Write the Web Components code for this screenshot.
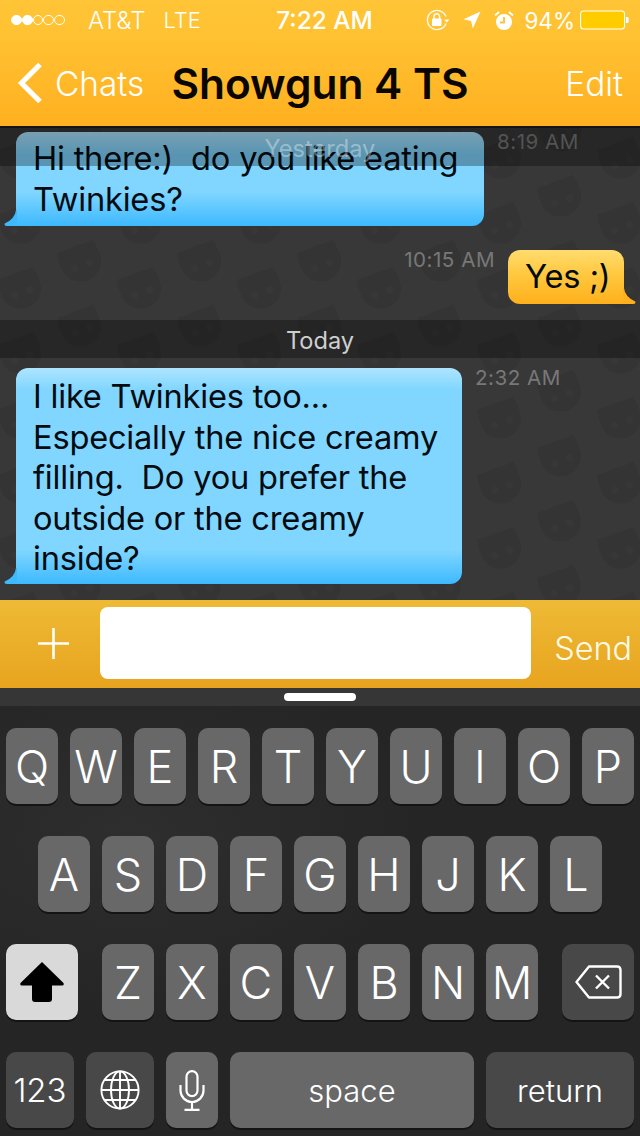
<!DOCTYPE html>
<html>
<head>
<meta charset="utf-8">
<title>Chat</title>
<style>
  html, body { margin: 0; padding: 0; background: #262626; }
  body { width: 640px; height: 1136px; overflow: hidden; font-family: Inter, "Liberation Sans", sans-serif; }
</style>
</head>
<body>
<chat-screen>
  <status-bar></status-bar>
  <nav-bar title="Showgun 4 TS" back="Chats" action="Edit"></nav-bar>
  <chat-view>
    <date-banner slot="overlay" faded>Yesterday</date-banner>
    <chat-bubble time="8:19 AM" style="margin-top:4px;--pt:6px;--pb:7px" w="468">Hi there:)&nbsp; do you like eating<br>Twinkies?</chat-bubble>
    <chat-bubble mine time="10:15 AM" style="margin-top:24px;--pt:6px;--pb:7.5px" w="116">Yes ;)</chat-bubble>
    <date-banner style="margin-top:16px">Today</date-banner>
    <chat-bubble time="2:32 AM" style="margin-top:10px;--pt:8px;--pb:5.5px" w="446">I like Twinkies too...<br>Especially the nice creamy<br>filling.&nbsp; Do you prefer the<br>outside or the creamy<br>inside?</chat-bubble>
  </chat-view>
  <composer-bar></composer-bar>
  <ios-keyboard></ios-keyboard>
</chat-screen>

<script>
const FONT = 'Inter, "Liberation Sans", sans-serif';

class ChatScreen extends HTMLElement {
  constructor() {
    super();
    this.attachShadow({ mode: 'open' });
    this.shadowRoot.innerHTML = `
      <style>
        :host { display: flex; flex-direction: column; width: 640px; height: 1136px; overflow: hidden; }
      </style>
      <slot></slot>`;
  }
}

class StatusBar extends HTMLElement {
  constructor() {
    super();
    this.attachShadow({ mode: 'open' });
    this.shadowRoot.innerHTML = `
      <style>
        :host { display: grid; grid-template-columns: 1fr auto 1fr; align-items: center; height: 40px;
          background: linear-gradient(#ffc536, #ffc131); color: #fff; font: 300 24px ${FONT}; padding: 0 11px; box-sizing: border-box; }
        .l, .r { display: flex; align-items: center; }
        .r { justify-content: flex-end; }
        .dots { display: flex; margin-right: 23px; }
        .d { width: 8.8px; height: 8.8px; border: 1.1px solid #fff; border-radius: 50%; box-sizing: content-box; }
        .d.f { background: #fff; }
        .lte { margin-left: 18px; font-size: 22px; }
        .time { font-weight: 500; font-size: 24.4px; margin-left: 9px; }
        svg { display: block; }
        .pct { margin: 0 5px 0 10px; font-size: 22.5px; font-weight: 400; }
      </style>
      <div class="l">
        <div class="dots"><i class="d f"></i><i class="d f"></i><i class="d"></i><i class="d"></i><i class="d"></i></div>
        <span>AT&amp;T</span><span class="lte">LTE</span>
      </div>
      <div class="time">7:22 AM</div>
      <div class="r">
        <svg width="24" height="22" viewBox="0 0 24 22" style="margin-right:13px">
          <path d="M20 14.5A9.6 9.6 0 1 1 20 7.5" fill="none" stroke="#fff" stroke-width="1.3"/>
          <path d="M18 10.5h5.5l-2.7 3z" fill="#fff"/>
          <rect x="6" y="9.5" width="9.5" height="7.5" rx="1" fill="#fff"/>
          <path d="M8 10V7.6a2.8 2.8 0 0 1 5.6 0V10" fill="none" stroke="#fff" stroke-width="1.4"/>
        </svg>
        <svg width="18" height="18" viewBox="0 0 18 18" style="margin-right:13px">
          <path d="M17.5 .5L9.8 17.5 8 10 .5 8.2z" fill="#fff"/>
        </svg>
        <svg width="20" height="21" viewBox="0 0 20 21">
          <circle cx="10" cy="12" r="8" fill="#fff"/>
          <path d="M10 7v5.5H6" fill="none" stroke="#ffc131" stroke-width="1.8"/>
          <path d="M1 5.5L5 2M19 5.5L15 2" stroke="#fff" stroke-width="1.8" fill="none"/>
        </svg>
        <span class="pct">94%</span>
        <svg width="49" height="20" viewBox="0 0 49 20">
          <rect x=".6" y="1" width="44" height="18" rx="3" fill="#ffcc00" stroke="#fff" stroke-width="1.1"/>
          <path d="M46 7h1.2a1.5 1.5 0 0 1 1.5 1.5v3a1.5 1.5 0 0 1-1.5 1.5H46z" fill="#fff"/>
        </svg>
      </div>`;
  }
}

class NavBar extends HTMLElement {
  constructor() {
    super();
    this.attachShadow({ mode: 'open' });
    const back = this.getAttribute('back') || '';
    const title = this.getAttribute('title') || '';
    const action = this.getAttribute('action') || '';
    this.shadowRoot.innerHTML = `
      <style>
        :host { display: grid; grid-template-columns: 1fr auto 1fr; align-items: center; height: 88px;
          box-sizing: border-box; padding: 0 17px; color: #fff;
          background: linear-gradient(#ffc131, #ffb020); border-bottom: 2px solid #141414; font-family: ${FONT}; }
        .back { display: flex; align-items: center; gap: 12px; font-size: 33.4px; font-weight: 300; }
        .back span { padding-top: 2px; }
        h1 { margin: 0; font-size: 42.4px; font-weight: 600; color: #0a0700; white-space: nowrap; }
        .act { justify-self: end; font-size: 33.4px; font-weight: 300; padding-top: 2px; }
        svg { display: block; }
      </style>
      <div class="back">
        <svg width="26" height="42" viewBox="0 0 26 42"><path d="M23 2.5L4.5 21 23 39.5" fill="none" stroke="#fff" stroke-width="5.2"/></svg>
        <span>${back}</span>
      </div>
      <h1>${title}</h1>
      <div class="act">${action}</div>`;
  }
}

class ChatView extends HTMLElement {
  constructor() {
    super();
    this.attachShadow({ mode: 'open' });
    // wallpaper: faint staggered masks
    this.shadowRoot.innerHTML = `
      <style>
        :host { display: block; position: relative; height: 472px; background: #383838; overflow: hidden; }
        .wall { position: absolute; inset: 0; }
        .flow { position: relative; display: flex; flex-direction: column; }
        ::slotted([slot=overlay]) { position: absolute; left: 0; right: 0; top: 0; z-index: 2; }
      </style>
      <svg class="wall" width="640" height="472">
        <defs>
          <g id="m">
            <path d="M-19 -15L-8 -14Q0 -16 8 -14L19 -15Q22 -4 20 7Q15 21 0 22Q-15 21 -20 7Q-22 -4 -19 -15Z" fill="#343434"/>
            <circle cx="-8" cy="6" r="3.5" fill="#373737"/>
            <circle cx="8" cy="6" r="3.5" fill="#373737"/>
          </g>
          <pattern id="p" width="120" height="65" patternUnits="userSpaceOnUse">
            <use href="#m" transform="translate(20 29) rotate(-20)"/>
            <use href="#m" transform="translate(140 29) rotate(-20)"/>
            <use href="#m" transform="translate(80 2) rotate(-20)"/>
            <use href="#m" transform="translate(80 67) rotate(-20)"/>
          </pattern>
        </defs>
        <rect width="640" height="472" fill="url(#p)"/>
      </svg>
      <div class="flow"><slot></slot></div>
      <slot name="overlay"></slot>`;
  }
}

class DateBanner extends HTMLElement {
  constructor() {
    super();
    this.attachShadow({ mode: 'open' });
    const col = this.hasAttribute('faded') ? 'rgba(255,255,255,.36)' : '#cfcfcf';
    this.shadowRoot.innerHTML = `
      <style>
        :host { display: flex; align-items: center; justify-content: center; height: 38px; box-sizing: border-box; padding-top: 2px;
          background: rgba(0,0,0,.3); color: ${col}; font: 400 23.6px ${FONT}; }
      </style>
      <slot></slot>`;
  }
}

class ChatBubble extends HTMLElement {
  constructor() {
    super();
    this.attachShadow({ mode: 'open' });
    const mine = this.hasAttribute('mine');
    const w = this.getAttribute('w');
    const time = this.getAttribute('time') || '';
    const bg = mine
      ? 'linear-gradient(#ffdc6e, #ffc83f 45%, #ffb01c)'
      : 'linear-gradient(#aee5ff 0, #80d6ff 22px, #80d6ff calc(100% - 34px), #3db9ff 100%)';
    const tail = mine ? '#ffb01c' : '#3db9ff';
    this.shadowRoot.innerHTML = `
      <style>
        :host { display: flex; align-items: flex-start; gap: 13px; padding: 0 16px;
          flex-direction: ${mine ? 'row-reverse' : 'row'}; }
        .b { position: relative; width: ${w}px; box-sizing: border-box; padding: var(--pt) 8px var(--pb) 17px;
          border-radius: ${mine ? '12px 12px 0 12px' : '12px 12px 12px 0'}; background: ${bg};
          color: #020b10; font: 400 32.6px/40.5px ${FONT}; letter-spacing: -0.2px; white-space: nowrap; }
        .tail { position: absolute; bottom: 0; ${mine ? 'right: -12px' : 'left: -12px'}; display: block; }
        .t { color: #787878; font: 400 20.6px/20px ${FONT}; letter-spacing: .5px; }
      </style>
      <div class="b">
        <slot></slot>
        <svg class="tail" width="13" height="16" viewBox="0 0 13 16">
          ${mine
            ? '<path d="M0 0h1Q2 9 12.3 13.5Q13 16 10 16H0Z" fill="' + tail + '"/>'
            : '<path d="M13 0h-1Q11 9 .7 13.5Q0 16 3 16H13Z" fill="' + tail + '"/>'}
        </svg>
      </div>
      <div class="t">${time}</div>`;
  }
}

class ComposerBar extends HTMLElement {
  constructor() {
    super();
    this.attachShadow({ mode: 'open' });
    this.shadowRoot.innerHTML = `
      <style>
        :host { display: block; font-family: ${FONT}; }
        .bar { display: flex; align-items: center; height: 88px; box-sizing: border-box; padding: 7px 8px 9px 37px;
          background: linear-gradient(#eeba35, #e8a41f); }
        .plus { width: 33px; height: 33px; flex: none; margin-right: 30px; }
        .field { flex: none; width: 431px; height: 72px; background: #fff; border-radius: 8px; }
        .send { margin-left: auto; color: #fffbe8; font-size: 32.4px; font-weight: 300; padding-top: 10px; }
        .strip { display: flex; justify-content: center; align-items: flex-start; height: 18px; padding-top: 5px;
          box-sizing: border-box; background: #363636; }
        .handle { width: 72px; height: 8px; background: #fff; border-radius: 4px; }
      </style>
      <div class="bar">
        <svg class="plus" viewBox="0 0 33 33"><path d="M16.5 1v31M1 16.5h31" stroke="#fff" stroke-width="2.6"/></svg>
        <div class="field"></div>
        <div class="send">Send</div>
      </div>
      <div class="strip"><div class="handle"></div></div>`;
  }
}

class KbKey extends HTMLElement {
  constructor() {
    super();
    this.attachShadow({ mode: 'open' });
    const w = this.getAttribute('w') || 52;
    const kind = this.getAttribute('kind') || '';
    const bg = kind === 'dark' ? '#484848' : kind === 'on' ? '#d9d9d9' : '#686868';
    const size = this.getAttribute('size') || 45;
    const weight = this.getAttribute('weight') || 340;
    this.shadowRoot.innerHTML = `
      <style>
        :host { display: flex; align-items: center; justify-content: center; flex: none; width: ${w}px; height: 76px;
          border-radius: 10px; background: ${bg}; box-shadow: 0 2px 0 #141414; color: #fff;
          font: ${weight} ${size}px ${FONT}; }
        ::slotted(svg) { display: block; }
      </style>
      <slot></slot>`;
  }
}

class IosKeyboard extends HTMLElement {
  constructor() {
    super();
    this.attachShadow({ mode: 'open' });
    const row = s => [...s].map(c => `<kb-key>${c}</kb-key>`).join('');
    this.shadowRoot.innerHTML = `
      <style>
        :host { display: flex; flex-direction: column; gap: 32px; height: 430px; box-sizing: border-box; padding: 22px 6px 8px;
          background: radial-gradient(ellipse 300px 180px at 130px 130px, #2e2e2e, #252525); }
        .row { display: flex; gap: 12px; justify-content: center; }
        .row.three { justify-content: flex-start; }
      </style>
      <div class="row">${row('QWERTYUIOP')}</div>
      <div class="row">${row('ASDFGHJKL')}</div>
      <div class="row three">
        <kb-key w="72" kind="on" style="margin-right:12px">
          <svg width="44" height="40" viewBox="0 0 44 40"><path d="M22 0L43.5 21Q44.5 23.5 42 23.5H32V37Q32 40 29 40H15Q12 40 12 37V23.5H2Q-.5 23.5 .5 21Z" fill="#000"/></svg>
        </kb-key>
        ${row('ZXCVBNM')}
        <kb-key w="72" kind="dark" style="margin-left:12px">
          <svg width="47" height="34" viewBox="0 0 47 34" fill="none" stroke="#fff" stroke-width="2.4">
            <path d="M14 1.5H42Q45.5 1.5 45.5 5V29Q45.5 32.5 42 32.5H14L1.5 17Z" stroke-linejoin="round"/>
            <path d="M21 10.5L34 23.5M34 10.5L21 23.5"/>
          </svg>
        </kb-key>
      </div>
      <div class="row">
        <kb-key w="68" kind="dark" size="33">123</kb-key>
        <kb-key w="68" kind="dark">
          <svg width="40" height="40" viewBox="0 0 40 40" fill="none" stroke="#fff" stroke-width="1.9">
            <circle cx="20" cy="20" r="18.6"/>
            <ellipse cx="20" cy="20" rx="9" ry="18.6"/>
            <path d="M20 1.4V38.6M1.4 20H38.6M4.5 10H35.5M4.5 30H35.5"/>
          </svg>
        </kb-key>
        <kb-key>
          <svg width="26" height="41" viewBox="0 0 26 41" fill="none" stroke="#fff" stroke-width="2.2">
            <rect x="7.5" y="1.1" width="11" height="25" rx="5.5"/>
            <path d="M1.5 15V20.5A11.5 11.5 0 0 0 24.5 20.5V15M13 32V39M5.5 39.8H20.5"/>
          </svg>
        </kb-key>
        <kb-key w="244" size="31">space</kb-key>
        <kb-key w="148" kind="dark" size="31">return</kb-key>
      </div>`;
  }
}

customElements.define('chat-screen', ChatScreen);
customElements.define('status-bar', StatusBar);
customElements.define('nav-bar', NavBar);
customElements.define('chat-view', ChatView);
customElements.define('date-banner', DateBanner);
customElements.define('chat-bubble', ChatBubble);
customElements.define('composer-bar', ComposerBar);
customElements.define('kb-key', KbKey);
customElements.define('ios-keyboard', IosKeyboard);
</script>
</body>
</html>
